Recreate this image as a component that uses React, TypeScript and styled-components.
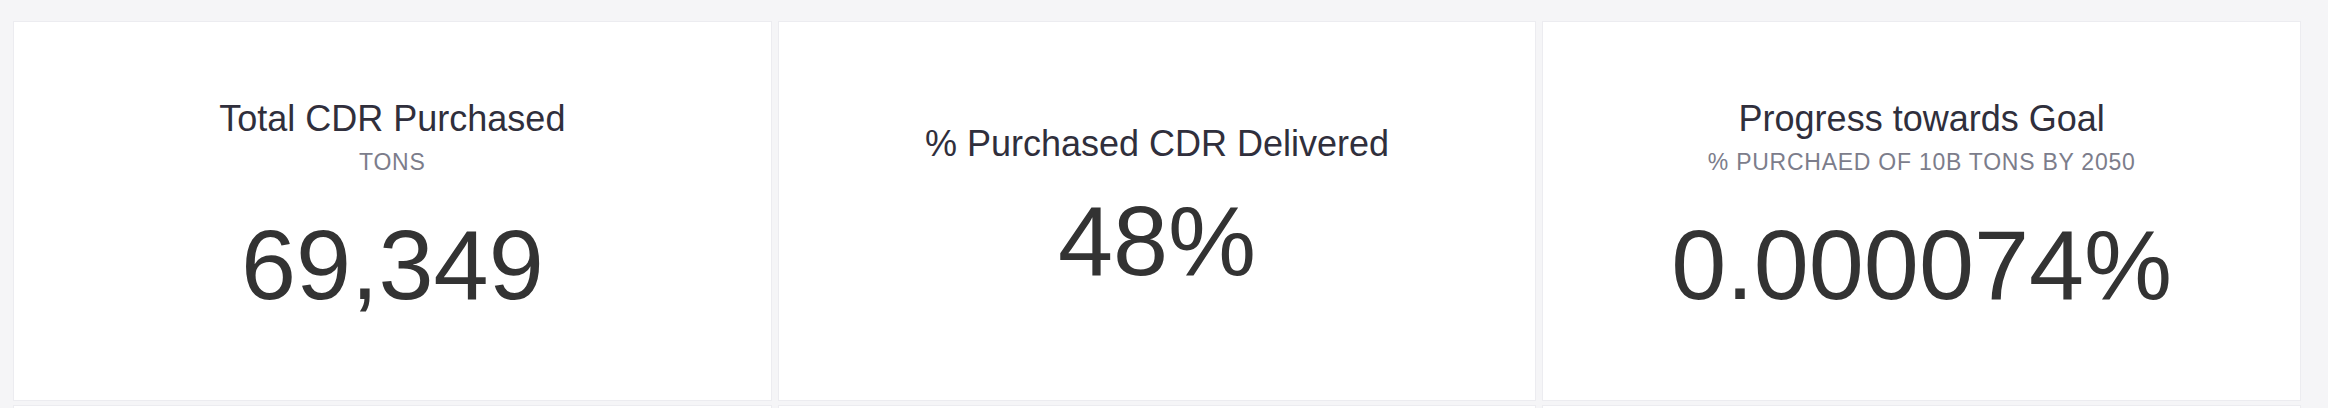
import React from "react";
import styled, { createGlobalStyle } from "styled-components";

const GlobalStyle = createGlobalStyle`
  html, body {
    margin: 0;
    padding: 0;
    background: #f5f5f7;
    overflow: hidden;
  }
  body {
    font-family: "Liberation Sans", Arial, sans-serif;
  }
`;

const Grid = styled.div`
  display: grid;
  grid-template-columns: repeat(3, 1fr);
  column-gap: 6px;
  row-gap: 4px;
  padding: 21px 27px 0 13px;
`;

const Card = styled.div<{ $height: number }>`
  box-sizing: border-box;
  height: ${(p) => p.$height}px;
  background: #ffffff;
  border: 1px solid #ececf0;
  display: flex;
  flex-direction: column;
  align-items: center;
  justify-content: center;
`;

const Title = styled.h2`
  margin: 0;
  font-size: 36px;
  line-height: 1.2;
  font-weight: 400;
  color: #302f3c;
`;

const Subtitle = styled.div`
  margin-top: 9px;
  margin-bottom: 13px;
  font-size: 23px;
  line-height: 1.2;
  letter-spacing: 0.75px;
  text-transform: uppercase;
  color: #7c7d8b;
`;

const Value = styled.div`
  margin-top: 17px;
  font-size: 99px;
  line-height: 1.2;
  color: #333333;
`;

type Stat = {
  title: string;
  subtitle?: string;
  value: string;
};

const stats: Stat[] = [
  { title: "Total CDR Purchased", subtitle: "Tons", value: "69,349" },
  { title: "% Purchased CDR Delivered", value: "48%" },
  {
    title: "Progress towards Goal",
    subtitle: "% Purchaed of 10B tons by 2050",
    value: "0.000074%",
  },
];

const StatCard: React.FC<{ stat: Stat }> = ({ stat }) => (
  <Card $height={380}>
    <Title>{stat.title}</Title>
    {stat.subtitle && <Subtitle>{stat.subtitle}</Subtitle>}
    <Value>{stat.value}</Value>
  </Card>
);

const App: React.FC = () => {
  return (
    <>
      <GlobalStyle />
      <Grid>
        {stats.map((s) => (
          <StatCard key={s.title} stat={s} />
        ))}
        <Card $height={320} />
        <Card $height={320} />
        <Card $height={320} />
      </Grid>
    </>
  );
};

export default App;
